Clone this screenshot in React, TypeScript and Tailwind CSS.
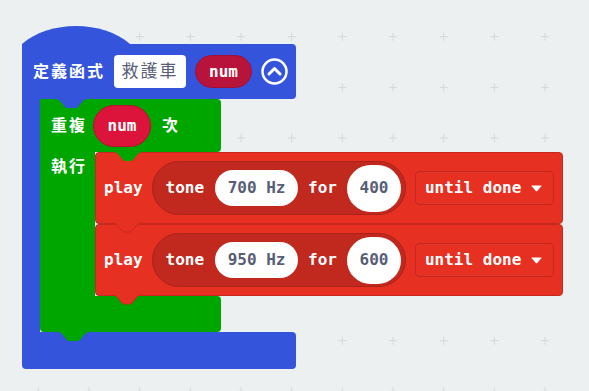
import React from "react";

function Tab({
  w = 33,
  fill,
  stroke,
  className,
}: {
  w?: number;
  fill: string;
  stroke?: string;
  className?: string;
}) {
  const d = `M0 0 C3 0 4 1 6 3 L10 8 C11 9 12 9 13 9 H${w - 13} C${w - 12} 9 ${w - 11} 9 ${w - 10} 8 L${w - 6} 3 C${w - 4} 1 ${w - 3} 0 ${w} 0`;
  return (
    <svg className={className} width={w} height={11} viewBox={`0 -1 ${w} 11`}>
      <path d={d + " Z"} fill={fill} />
      {stroke && <path d={d} fill="none" stroke={stroke} strokeWidth={1} />}
    </svg>
  );
}

function Grid() {
  const items: React.ReactNode[] = [];
  for (let i = -1; i < 12; i++) {
    for (let j = -1; j < 9; j++) {
      const x = 38.3 + 50.67 * i;
      const y = 36.7 + 50.67 * j;
      items.push(
        <g key={`${i}-${j}`}>
          <line x1={x - 4} y1={y} x2={x + 4} y2={y} />
          <line x1={x} y1={y - 4} x2={x} y2={y + 4} />
        </g>
      );
    }
  }
  return (
    <svg className="absolute inset-0" width={589} height={391}>
      <g stroke="#d3d8dc" strokeWidth={1}>
        {items}
      </g>
    </svg>
  );
}

function PlayBlock({ freq, dur, z }: { freq: string; dur: string; z: string }) {
  return (
    <div
      className={`relative ${z} flex h-[72px] w-[468px] items-center rounded-[4px] border border-[#c8291d] bg-[#e63022] pl-[8px]`}
    >
      <span className="font-bold text-white">play</span>
      <div className="ml-[9px] flex h-[54px] items-center rounded-full border border-[#a9231a] bg-[#c1281e] pl-[13px] pr-[4px]">
        <span className="font-bold text-white">tone</span>
        <div className="ml-[11px] flex h-[36px] w-[83px] items-center justify-center rounded-full bg-white font-bold text-[#575e75]">
          {freq} Hz
        </div>
        <span className="ml-[10px] font-bold text-white">for</span>
        <div className="ml-[10px] flex h-[47px] w-[54px] items-center justify-center rounded-full bg-white font-bold text-[#575e75]">
          {dur}
        </div>
      </div>
      <div className="ml-[9px] flex h-[34px] w-[139px] items-center rounded-[4px] border border-[#c4281c] bg-[#e63022] pl-[9px]">
        <span className="font-bold text-white">until done</span>
        <svg className="ml-[10px]" width={11} height={7} viewBox="0 0 11 7">
          <path d="M1 0.5 H10 Q10.8 0.5 10.3 1.2 L6.2 6 Q5.5 6.7 4.8 6 L0.7 1.2 Q0.2 0.5 1 0.5 Z" fill="#fff" />
        </svg>
      </div>
      <Tab
        w={30}
        fill="#e63022"
        stroke="#c8291d"
        className="absolute left-[16px] top-full -mt-[1px]"
      />
    </div>
  );
}

function GreenBlock() {
  return (
    <div className="flex flex-col">
      <div className="relative z-40 flex h-[53px] w-[181px] items-center rounded-r-[4px] bg-[#00a600] pl-[11px]">
        <span className="font-bold tracking-[2px] text-white">重複</span>
        <div className="ml-[6px] flex h-[42px] w-[58px] items-center justify-center rounded-full border border-[#b8102f] bg-[#dc143c] font-bold text-white">
          num
        </div>
        <span className="ml-[11px] font-bold text-white">次</span>
        <Tab w={30} fill="#00a600" className="absolute left-[73px] top-full -mt-[1px]" />
      </div>
      <div className="flex">
        <div className="w-[55px] bg-[#00a600] pl-[11px] pt-[5px]">
          <span className="block font-bold leading-[20px] tracking-[2px] text-white">執行</span>
        </div>
        <div className="flex flex-col">
          <PlayBlock freq="700" dur="400" z="z-30" />
          <PlayBlock freq="950" dur="600" z="z-20" />
        </div>
      </div>
      <div className="relative z-10 h-[36px] w-[181px] rounded-b-[4px] rounded-tr-[4px] bg-[#00a600]">
        <Tab fill="#00a600" className="absolute left-[17px] top-full -mt-[1px]" />
      </div>
    </div>
  );
}

export default function App() {
  return (
    <div className="relative h-[391px] w-[589px] overflow-hidden bg-[#ecf0f1] font-['DejaVu_Sans_Mono','Noto_Sans_CJK_TC',monospace] text-[16px] leading-none">
      <Grid />
      <div className="relative flex flex-col items-start pl-[22px] pt-[44px]">
        <div className="flex flex-col">
          <div className="relative z-50 flex h-[55px] w-[274px] items-center rounded-r-[4px] bg-[#3455db] pl-[11px]">
            <svg className="absolute bottom-full left-0 -mb-[1px]" width={108} height={19} viewBox="0 0 108 19">
              <path d="M0 19 L0 18 C27 -6 81 -6 108 18 L108 19 Z" fill="#3455db" />
            </svg>
            <span className="font-bold tracking-[2px] text-white">定義函式</span>
            <div className="ml-[9px] flex h-[33px] w-[72px] items-center justify-center rounded-[4px] bg-white text-[17px] tracking-[2px] text-[#575e75]">
              救護車
            </div>
            <div className="ml-[9px] flex h-[33px] w-[57px] items-center justify-center rounded-full border border-[#a01034] bg-[#b8143b] font-bold text-white">
              num
            </div>
            <svg className="ml-[9px]" width={27} height={27} viewBox="0 0 27 27">
              <circle cx={13.5} cy={13.5} r={12} fill="none" stroke="#fff" strokeWidth={2.5} />
              <polyline
                points="8,16 13.5,10.5 19,16"
                fill="none"
                stroke="#fff"
                strokeWidth={3}
                strokeLinecap="round"
                strokeLinejoin="round"
              />
            </svg>
            <Tab fill="#3455db" className="absolute left-[33px] top-full -mt-[1px]" />
          </div>
          <div className="flex">
            <div className="w-[18px] bg-[#3455db]" />
            <GreenBlock />
          </div>
          <div className="h-[37px] w-[274px] rounded-b-[4px] rounded-tr-[4px] bg-[#3455db]" />
        </div>
      </div>
    </div>
  );
}
